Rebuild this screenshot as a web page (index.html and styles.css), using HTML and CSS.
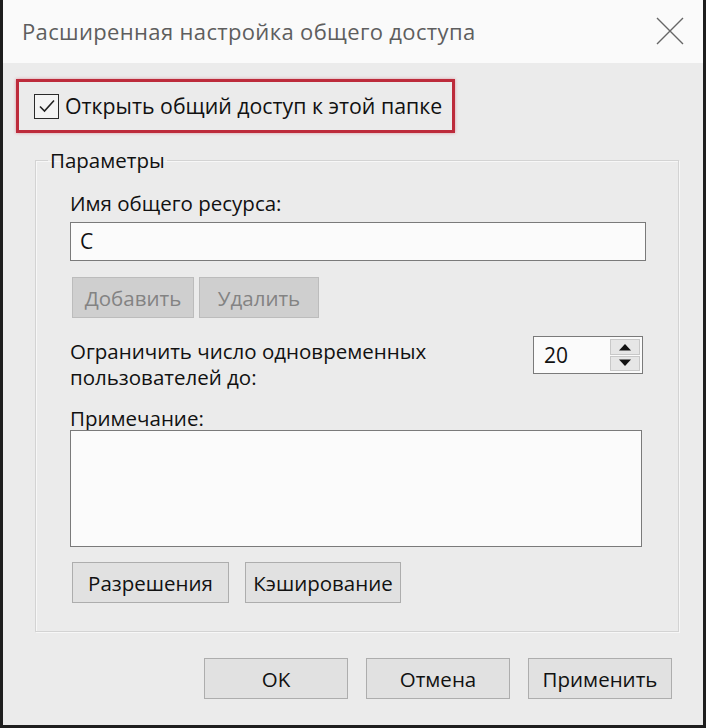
FILE: index.html
```html
<!DOCTYPE html>
<html lang="ru">
<head>
<meta charset="utf-8">
<title>Расширенная настройка общего доступа</title>
<link rel="stylesheet" href="styles.css">
</head>
<body>
<div class="window">
  <div class="titlebar">
    <span class="title">Расширенная настройка общего доступа</span>
    <svg class="close" width="30" height="30" viewBox="0 0 30 30"><path d="M2 2 L28 28 M28 2 L2 28" stroke="#666" stroke-width="1.4" fill="none"/></svg>
  </div>
  <div class="body">
    <div class="highlight">
      <div class="check">
        <span class="box"><svg width="22" height="22" viewBox="0 0 22 22"><path d="M4 11.5 L8.5 16 L18 5.5" stroke="#222" stroke-width="1.6" fill="none"/></svg></span>
        <span class="check-text">Открыть общий доступ к этой папке</span>
      </div>
    </div>
    <fieldset class="group">
      <legend class="legend">Параметры</legend>
      <div class="group-inner">
        <div class="label">Имя общего ресурса:</div>
        <div class="input">C</div>
        <div class="row row-tight">
          <div class="btn btn-disabled btn-add">Добавить</div>
          <div class="btn btn-disabled btn-del">Удалить</div>
        </div>
        <div class="limit-row">
          <div class="limit-text">Ограничить число одновременных<br>пользователей до:</div>
          <div class="spinner">
            <span class="spin-value">20</span>
            <span class="spin-arrows">
              <span class="arrow"><svg width="14" height="8" viewBox="0 0 14 8"><path d="M1 7.5 L7 1 L13 7.5 Z" fill="#111"/></svg></span>
              <span class="arrow"><svg width="14" height="8" viewBox="0 0 14 8"><path d="M1 0.5 L7 7 L13 0.5 Z" fill="#111"/></svg></span>
            </span>
          </div>
        </div>
        <div class="label label-note">Примечание:</div>
        <div class="textarea"></div>
        <div class="row row-wide">
          <div class="btn btn-perm">Разрешения</div>
          <div class="btn btn-cache">Кэширование</div>
        </div>
      </div>
    </fieldset>
    <div class="footer">
      <div class="btn btn-foot">OK</div>
      <div class="btn btn-foot">Отмена</div>
      <div class="btn btn-foot">Применить</div>
    </div>
  </div>
</div>
</body>
</html>
```
FILE: styles.css
```css
* { box-sizing: border-box; }
html, body { margin: 0; padding: 0; }
body {
  width: 706px;
  height: 728px;
  background: #ebebeb;
  font-family: "Open Sans", "Noto Sans", sans-serif;
  color: #111;
  overflow: hidden;
}
.window {
  width: 706px;
  height: 728px;
  border-left: 3px solid #1e1e1e;
  border-right: 3px solid #1e1e1e;
  border-bottom: 3px solid #1e1e1e;
  background: #ebebeb;
  display: flex;
  flex-direction: column;
}
.titlebar {
  height: 63px;
  background: #fafafa;
  display: flex;
  align-items: center;
  justify-content: space-between;
  padding: 0 18px 0 19px;
  flex-shrink: 0;
}
.title {
  font-size: 22px;
  color: #5e5e5e;
  letter-spacing: 0.35px;
  margin-top: -1px;
}
.close { margin-top: -1px; }
.body {
  display: flex;
  flex-direction: column;
}
.highlight {
  margin: 16px 0 0 13px;
  width: 439px;
  height: 54px;
  border: 3px solid #bd2b3b;
  box-shadow: 0 0 3px rgba(200, 50, 70, 0.45);
  display: flex;
  align-items: center;
  padding-left: 15px;
}
.check {
  display: flex;
  align-items: center;
  gap: 6px;
}
.box {
  width: 25px;
  height: 25px;
  border: 1.5px solid #2a2a2a;
  background: #f4f4f4;
  display: flex;
  align-items: center;
  justify-content: center;
}
.check-text {
  font-size: 21.3px;
  line-height: 26px;
}
.group {
  margin: 15px 0 0 32px;
  width: 644px;
  padding: 0;
  border: 1px solid #d3d3d3;
  box-shadow: inset 1px 1px 0 #f7f7f7, 1px 1px 0 #f7f7f7;
  min-width: 0;
}
.legend {
  margin-left: 12px;
  padding: 0 2px;
  font-size: 20.5px;
  line-height: 24px;
}
.group-inner {
  padding: 19px 0 28px 34px;
  display: flex;
  flex-direction: column;
}
.label {
  font-size: 20.5px;
  line-height: 24px;
}
.input {
  margin-top: 7px;
  width: 576px;
  height: 39px;
  background: #fbfbfb;
  border: 1.5px solid #7a7a7a;
  font-size: 21px;
  line-height: 36px;
  padding-left: 9px;
}
.row {
  display: flex;
  margin-left: 2px;
}
.row-tight { margin-top: 16px; gap: 5px; }
.row-wide { margin-top: 15px; gap: 16px; }
.btn {
  height: 41px;
  background: #e1e1e1;
  border: 1.5px solid #adadad;
  display: flex;
  align-items: center;
  justify-content: center;
  font-size: 20.5px;
  color: #111;
}
.btn-disabled {
  background: #cfcfcf;
  border-color: #bcbcbc;
  color: #838383;
}
.btn-add { width: 122px; }
.btn-del { width: 120px; }
.btn-perm { width: 157px; }
.btn-cache { width: 156px; }
.limit-row {
  margin-top: 18px;
  width: 573px;
  display: flex;
  justify-content: space-between;
  align-items: flex-start;
}
.limit-text {
  padding-top: 2px;
  font-size: 20.5px;
  line-height: 26px;
}
.spinner {
  width: 110px;
  height: 38px;
  background: #fbfbfb;
  border: 1.5px solid #7a7a7a;
  display: flex;
  justify-content: space-between;
  padding: 2px 2px 2px 10px;
}
.spin-value {
  font-size: 21px;
  line-height: 32px;
}
.spin-arrows {
  width: 30px;
  display: flex;
  flex-direction: column;
  gap: 1px;
}
.arrow {
  flex: 1;
  background: #e6e6e6;
  border: 1px solid #c8c8c8;
  display: flex;
  align-items: center;
  justify-content: center;
}
.label-note { margin-top: 16px; }
.textarea {
  width: 572px;
  height: 117px;
  background: #fbfbfb;
  border: 1.5px solid #7a7a7a;
}
.footer {
  margin-top: 26px;
  display: flex;
  justify-content: flex-end;
  gap: 18px;
  padding-right: 31px;
}
.btn-foot { width: 144px; }
```
